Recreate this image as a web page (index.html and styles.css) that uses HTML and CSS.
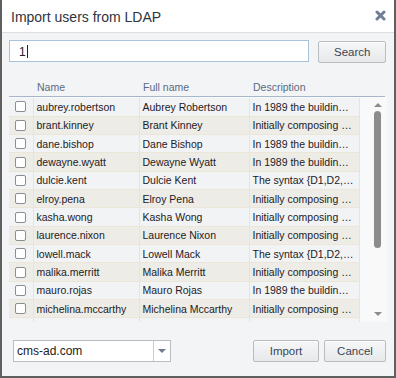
FILE: index.html
```html
<!DOCTYPE html>
<html lang="en">
<head>
    <meta charset="UTF-8">
    <title>Import users from LDAP</title>
    <link rel="stylesheet" href="styles.css">
</head>
<body>
    <div class="dialog">
        <div class="titlebar">
            <span class="title">Import users from LDAP</span>
            <svg class="close" width="11" height="11" viewBox="0 0 11 11">
                <path d="M2 2 L9 9 M9 2 L2 9" stroke="#6f7e97" stroke-width="3" stroke-linecap="round"/>
            </svg>
        </div>
        <div class="content">
            <div class="search-row">
                <div class="search-input">1<span class="caret"></span></div>
                <button class="btn search-btn">Search</button>
            </div>
            <div class="grid">
                <div class="grid-head">
                    <div class="col-check"></div>
                    <div class="col-name">Name</div>
                    <div class="col-full">Full name</div>
                    <div class="col-desc">Description</div>
                </div>
                <div class="grid-main">
                    <div class="grid-rows">
                        <table>
                            <tbody id="rows"></tbody>
                        </table>
                    </div>
                    <div class="scrollbar">
                        <span class="arrow up"></span>
                        <span class="thumb"></span>
                        <span class="arrow down"></span>
                    </div>
                </div>
            </div>
            <div class="footer">
                <div class="select">
                    <span class="select-value">cms-ad.com</span>
                    <span class="select-btn"><span class="caret-down"></span></span>
                </div>
                <div class="actions">
                    <button class="btn">Import</button>
                    <button class="btn">Cancel</button>
                </div>
            </div>
        </div>
    </div>

    <script>
        const users = [
            ['aubrey.robertson', 'Aubrey Robertson', 'In 1989 the buildin\u2026'],
            ['brant.kinney', 'Brant Kinney', 'Initially composing \u2026'],
            ['dane.bishop', 'Dane Bishop', 'In 1989 the buildin\u2026'],
            ['dewayne.wyatt', 'Dewayne Wyatt', 'In 1989 the buildin\u2026'],
            ['dulcie.kent', 'Dulcie Kent', 'The syntax {D1,D2,\u2026'],
            ['elroy.pena', 'Elroy Pena', 'Initially composing \u2026'],
            ['kasha.wong', 'Kasha Wong', 'Initially composing \u2026'],
            ['laurence.nixon', 'Laurence Nixon', 'Initially composing \u2026'],
            ['lowell.mack', 'Lowell Mack', 'The syntax {D1,D2,\u2026'],
            ['malika.merritt', 'Malika Merritt', 'Initially composing \u2026'],
            ['mauro.rojas', 'Mauro Rojas', 'In 1989 the buildin\u2026'],
            ['michelina.mccarthy', 'Michelina Mccarthy', 'Initially composing \u2026'],
            ['pia.browning', 'Pia Browning', 'The syntax {D1,D2,\u2026']
        ];
        const body = document.getElementById('rows');
        users.forEach(function(u) {
            const row = document.createElement('tr');
            row.innerHTML = `
                <td class="col-check"><span class="checkbox"></span></td>
                <td class="col-name">${u[0]}</td>
                <td class="col-full">${u[1]}</td>
                <td class="col-desc">${u[2]}</td>
            `;
            body.appendChild(row);
        });
    </script>
</body>
</html>
```

FILE: styles.css
```css
body {
    margin: 0;
    font-family: 'Liberation Sans', Arial, sans-serif;
    background-color: #ffffff;
}
.dialog {
    width: 396px;
    height: 378px;
    box-sizing: border-box;
    border: 2px solid #5f5f5f;
    border-top: none;
    background-color: #f3f4f5;
    display: flex;
    flex-direction: column;
}
.titlebar {
    height: 33px;
    box-sizing: border-box;
    background-color: #ffffff;
    border-bottom: 1px solid #dcdee2;
    display: flex;
    align-items: center;
    justify-content: space-between;
    padding: 0 8px 0 9px;
}
.title {
    font-size: 14px;
    color: #2f3440;
    margin-top: 1px;
}
.close {
    margin-bottom: 1px;
}
.content {
    flex: 1;
    padding: 7px 8px 0 7px;
    display: flex;
    flex-direction: column;
}
.search-row {
    display: flex;
    align-items: flex-start;
    gap: 9px;
}
.search-input {
    width: 302px;
    height: 22px;
    box-sizing: border-box;
    border: 1px solid #a9c1da;
    background-color: #ffffff;
    font-size: 12px;
    color: #222;
    padding: 4px 0 0 9px;
    display: flex;
    align-items: flex-start;
}
.caret {
    display: inline-block;
    width: 1px;
    height: 13px;
    background-color: #222;
    margin-left: 1px;
}
.btn {
    font-family: 'Liberation Sans', Arial, sans-serif;
    font-size: 11.5px;
    color: #3c4555;
    height: 22px;
    padding: 0;
    border: 1px solid #b9bdc2;
    border-radius: 2px;
    background: linear-gradient(#f7f7f8, #e6e8ea);
    box-shadow: inset 0 1px 0 #ffffff;
}
.search-btn {
    width: 68px;
    margin-top: 1px;
}
.grid {
    margin-top: 17px;
    width: 378px;
}
.grid-head {
    display: flex;
    height: 17px;
    border-bottom: 1px solid #a8b6cc;
    font-size: 10.5px;
    color: #5b6a84;
    box-sizing: border-box;
    margin-right: 2px;
}
.grid-head > div {
    padding: 1px 0 0 3px;
    box-sizing: border-box;
}
.grid-head .col-check { width: 25px; }
.grid-head .col-name { width: 106px; }
.grid-head .col-full { width: 110px; }
.grid-head .col-desc { width: 110px; }
.grid-main {
    display: flex;
    height: 225px;
    background-color: #f8f9fa;
}
.grid-rows {
    flex: 1;
    overflow: hidden;
    padding-top: 1px;
}
table {
    border-collapse: collapse;
    table-layout: fixed;
    width: 350px;
    font-size: 10.5px;
    color: #1e2024;
}
td {
    height: 18.33px;
    padding: 0 0 0 3px;
    box-sizing: border-box;
    border-right: 1px solid #e9e4d6;
    border-bottom: 1px solid #ebe6d8;
    white-space: nowrap;
    overflow: hidden;
}
tbody tr:nth-child(odd) td {
    background-color: #f2f3f5;
}
tbody tr:nth-child(even) td {
    background-color: #edece6;
}
td.col-check { width: 24px; padding: 0 0 0 6px; }
td.col-name { width: 106px; }
td.col-full { width: 110px; }
td.col-desc { width: 110px; }
.checkbox {
    display: block;
    width: 9px;
    height: 9px;
    border: 1px solid #8a8d92;
    border-radius: 2px;
    background-color: #ffffff;
}
.scrollbar {
    width: 14px;
    position: relative;
    background-color: #f9f9fa;
    margin-right: 2px;
}
.thumb {
    position: absolute;
    left: 3px;
    top: 14px;
    width: 7px;
    height: 137px;
    border-radius: 4px;
    background-color: #8c8c8c;
}
.arrow {
    position: absolute;
    left: 3px;
    width: 0;
    height: 0;
    border-left: 4px solid transparent;
    border-right: 4px solid transparent;
}
.arrow.up {
    top: 6px;
    border-bottom: 4px solid #8c8c8c;
}
.arrow.down {
    bottom: 6px;
    border-top: 4px solid #8c8c8c;
}
.footer {
    margin-top: 18px;
    display: flex;
    justify-content: space-between;
    align-items: flex-start;
}
.select {
    margin-left: 4px;
    width: 158px;
    height: 22px;
    box-sizing: border-box;
    border: 1px solid #b9bdc2;
    background-color: #ffffff;
    display: flex;
}
.select-value {
    flex: 1;
    font-size: 12px;
    color: #222;
    padding: 3px 0 0 3px;
}
.select-btn {
    width: 16px;
    border-left: 1px solid #c9ccd0;
    display: flex;
    align-items: center;
    justify-content: center;
}
.caret-down {
    width: 0;
    height: 0;
    border-left: 4px solid transparent;
    border-right: 4px solid transparent;
    border-top: 4px solid #6f7b8e;
}
.actions {
    display: flex;
    gap: 5px;
}
.actions .btn:first-child { width: 66px; }
.actions .btn:last-child { width: 62px; }
```
